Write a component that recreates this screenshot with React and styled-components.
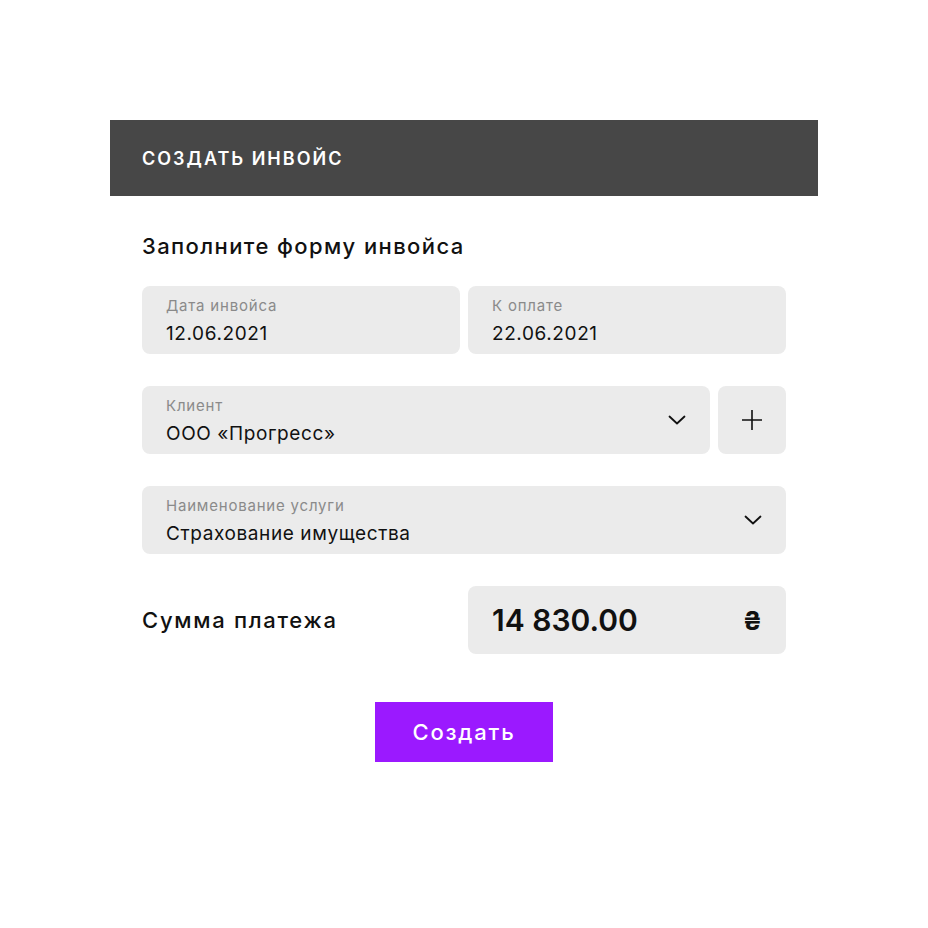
import styled, { createGlobalStyle } from 'styled-components';

const GlobalStyle = createGlobalStyle`
  html, body {
    margin: 0;
    padding: 0;
    background: #ffffff;
  }
  body {
    font-family: Inter, "Noto Sans", "Liberation Sans", sans-serif;
    color: #111;
  }
`;

function ChevronIcon() {
  return (
    <svg width="18" height="10" viewBox="0 0 18 10" fill="none">
      <path d="M1.5 1.5L9 8.5L16.5 1.5" stroke="#111" strokeWidth="1.8" strokeLinecap="round" strokeLinejoin="round" />
    </svg>
  );
}

function PlusIcon() {
  return (
    <svg width="22" height="22" viewBox="0 0 22 22" fill="none">
      <path d="M11 1V21M1 11H21" stroke="#111" strokeWidth="1.6" />
    </svg>
  );
}

function Field({ label, value, chevron }) {
  return (
    <FieldBox>
      <FieldText>
        <FieldLabel>{label}</FieldLabel>
        <FieldValue>{value}</FieldValue>
      </FieldText>
      {chevron && <ChevronIcon />}
    </FieldBox>
  );
}

export default function App() {
  return (
    <Page>
      <GlobalStyle />
      <Card>
        <Header>Создать инвойс</Header>
        <Body>
          <Subtitle>Заполните форму инвойса</Subtitle>
          <Row cols="1fr 1fr">
            <Field label="Дата инвойса" value="12.06.2021" />
            <Field label="К оплате" value="22.06.2021" />
          </Row>
          <Row cols="1fr 68px">
            <Field label="Клиент" value="ООО «Прогресс»" chevron />
            <SquareButton>
              <PlusIcon />
            </SquareButton>
          </Row>
          <Row cols="1fr">
            <Field label="Наименование услуги" value="Страхование имущества" chevron />
          </Row>
          <Row cols="1fr 1fr">
            <SumLabel>Сумма платежа</SumLabel>
            <AmountBox>
              <Amount>14 830.00</Amount>
              <Currency>₴</Currency>
            </AmountBox>
          </Row>
          <Actions>
            <SubmitButton>Создать</SubmitButton>
          </Actions>
        </Body>
      </Card>
    </Page>
  );
}

const Page = styled.div`
  width: 928px;
  min-height: 928px;
  padding-top: 120px;
  box-sizing: border-box;
  display: flex;
  justify-content: center;
  align-items: flex-start;
`;

const Card = styled.div`
  width: 708px;
  background: #fff;
`;

const Header = styled.div`
  height: 76px;
  background: #474747;
  color: #fff;
  display: flex;
  align-items: center;
  padding: 0 32px;
  font-size: 18px;
  font-weight: 600;
  text-transform: uppercase;
  letter-spacing: 2px;
`;

const Body = styled.div`
  padding: 34px 32px 0;
  display: flex;
  flex-direction: column;
`;

const Subtitle = styled.h2`
  margin: 0 0 24px;
  font-size: 22px;
  font-weight: 500;
  line-height: 32px;
  letter-spacing: 1.4px;
  color: #111;
`;

const Row = styled.div`
  display: grid;
  grid-template-columns: ${({ cols }) => cols};
  gap: 8px;
  margin-bottom: 32px;
  align-items: center;
`;

const FieldBox = styled.div`
  height: 68px;
  box-sizing: border-box;
  background: #ebebeb;
  border-radius: 8px;
  padding: 0 24px;
  display: flex;
  align-items: center;
  justify-content: space-between;
`;

const FieldText = styled.div`
  display: flex;
  flex-direction: column;
  gap: 7px;
  padding-top: 2px;
`;

const FieldLabel = styled.span`
  font-size: 15px;
  line-height: 18px;
  letter-spacing: 0.8px;
  color: #8a8a8a;
`;

const FieldValue = styled.span`
  font-size: 19px;
  line-height: 24px;
  letter-spacing: 0.6px;
  color: #111;
`;

const SquareButton = styled.div`
  width: 68px;
  height: 68px;
  background: #ebebeb;
  border-radius: 8px;
  display: flex;
  align-items: center;
  justify-content: center;
`;

const SumLabel = styled.span`
  font-size: 22px;
  font-weight: 500;
  letter-spacing: 1.7px;
  color: #111;
`;

const AmountBox = styled(FieldBox)``;

const Amount = styled.span`
  font-size: 30px;
  font-weight: 600;
  color: #111;
`;

const Currency = styled.span`
  font-size: 26px;
  font-weight: 700;
  color: #111;
`;

const Actions = styled.div`
  display: flex;
  justify-content: center;
  margin-top: 16px;
`;

const SubmitButton = styled.button`
  width: 178px;
  height: 60px;
  border: none;
  background: #9b19ff;
  color: #fff;
  font-family: inherit;
  font-size: 22px;
  font-weight: 500;
  letter-spacing: 1.8px;
  cursor: pointer;
`;
